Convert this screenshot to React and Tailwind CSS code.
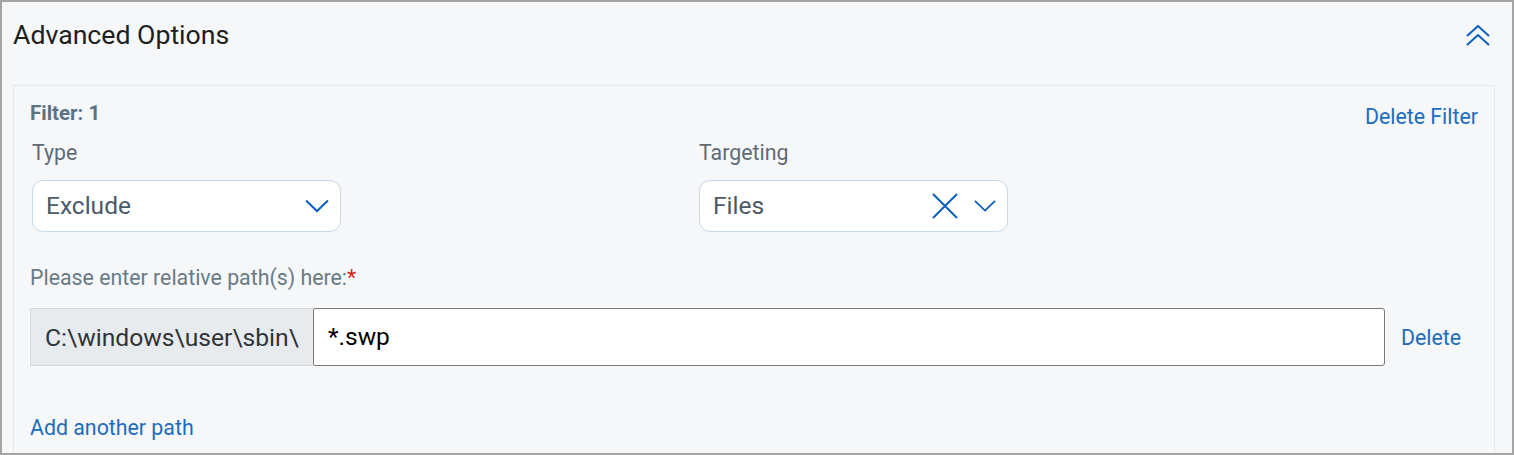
import React from "react";

const font = { fontFamily: "Roboto, 'Liberation Sans', sans-serif" };

function ChevronDown({ className }) {
  return (
    <svg className={className} width="24" height="14" viewBox="0 0 24 14" fill="none">
      <path d="M1 1.5 L12 12 L23 1.5" stroke="#0b5fbf" strokeWidth="2" />
    </svg>
  );
}

function XIcon() {
  return (
    <svg width="26" height="26" viewBox="0 0 26 26" fill="none">
      <path d="M1 1 L25 25 M25 1 L1 25" stroke="#0b5fbf" strokeWidth="2" />
    </svg>
  );
}

function DoubleUp() {
  return (
    <svg width="24" height="22" viewBox="0 0 24 22" fill="none">
      <path d="M1 11 L12 1 L23 11" stroke="#0b5fbf" strokeWidth="2" />
      <path d="M1 20 L12 10 L23 20" stroke="#0b5fbf" strokeWidth="2" />
    </svg>
  );
}

export default function App() {
  return (
    <div
      style={font}
      className="w-[1514px] h-[455px] overflow-hidden border-2 border-[#a4a4a4] bg-[#f5f7f9] flex flex-col"
    >
      <div className="flex items-center justify-between pl-[11px] pr-[22px] h-[83px] shrink-0">
        <div className="text-[26.67px] leading-none text-[#1e1e1e] -mt-[17px]">Advanced Options</div>
        <div className="-mt-[15px]">
          <DoubleUp />
        </div>
      </div>
      <div className="ml-[11px] mr-[17px] flex-1 border border-b-0 border-[#e4e7eb] pl-[16px] pr-[16px]">
        <div className="flex justify-between items-start h-[50px]">
          <div className="text-[20.5px] font-bold text-[#5c7383] mt-[17px] leading-none">Filter: 1</div>
          <div className="text-[21.33px] text-[#1e6cbf] mt-[20px] leading-none">Delete Filter</div>
        </div>
        <div className="flex">
          <div className="w-[669px] pl-[2px]">
            <div className="h-[44px] pt-[6px]">
              <div className="text-[21.33px] text-[#5f6b76] leading-none">Type</div>
            </div>
            <div className="w-[309px] h-[52px] rounded-[11px] border border-[#c6d9ee] bg-white flex items-center justify-between pl-[13px] pr-[11px]">
              <span className="text-[24.5px] text-[#4b5a67]">Exclude</span>
              <ChevronDown />
            </div>
          </div>
          <div>
            <div className="h-[44px] pt-[6px]">
              <div className="text-[21.33px] text-[#5f6b76] leading-none">Targeting</div>
            </div>
            <div className="w-[309px] h-[52px] rounded-[11px] border border-[#c6d9ee] bg-white flex items-center pl-[13px] pr-[11px]">
              <span className="text-[24.5px] text-[#4b5a67] flex-1">Files</span>
              <XIcon />
              <div className="ml-[16px]">
                <ChevronDown className="w-[22px]" />
              </div>
            </div>
          </div>
        </div>
        <div className="mt-[35px] text-[21.33px] leading-none text-[#687b87]">
          Please enter relative path(s) here:<span className="text-[#d7261e]">*</span>
        </div>
        <div className="mt-[20px] flex items-center">
          <div className="h-[58px] w-[283px] bg-[#e8ebee] border border-[#d6dade] border-r-0 flex items-center pl-[14px] text-[24.67px] text-[#2f3438]">
            C:\windows\user\sbin\
          </div>
          <div className="h-[58px] w-[1072px] bg-white border border-[#7a7a7a] rounded-r-[3px] rounded-l-[2px] flex items-center pl-[14px] text-[24.5px] text-black">
            *.swp
          </div>
          <div className="ml-[16px] mt-[2px] text-[21.33px] text-[#1e6cbf]">Delete</div>
        </div>
        <div className="mt-[51px] text-[21.33px] text-[#1e6cbf] leading-none">Add another path</div>
      </div>
    </div>
  );
}
